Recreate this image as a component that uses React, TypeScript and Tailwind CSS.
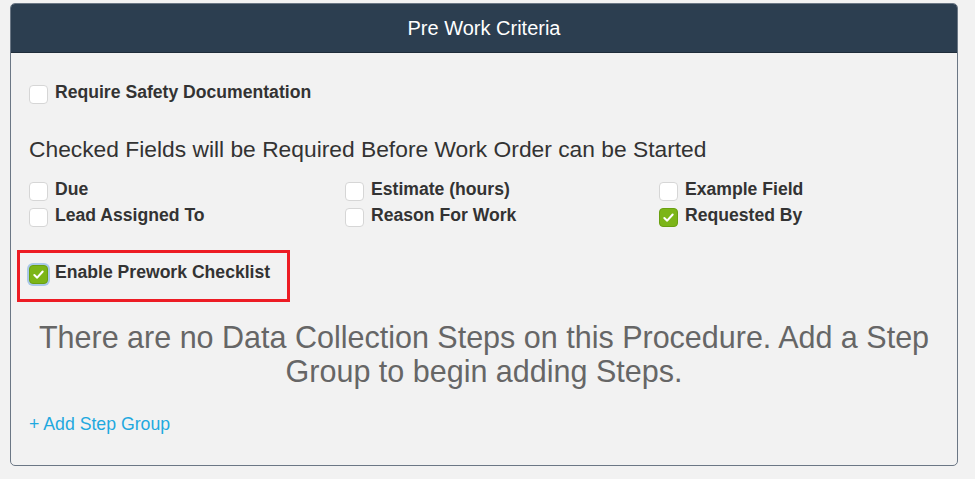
import { useState } from 'react';

const FIELDS: { label: string; checked: boolean }[] = [
  { label: 'Due', checked: false },
  { label: 'Estimate (hours)', checked: false },
  { label: 'Example Field', checked: false },
  { label: 'Lead Assigned To', checked: false },
  { label: 'Reason For Work', checked: false },
  { label: 'Requested By', checked: true },
];

function Check({ checked, focused, onToggle }: { checked: boolean; focused?: boolean; onToggle: () => void }) {
  return (
    <button
      type="button"
      onClick={onToggle}
      className={
        'w-[19px] h-[19px] shrink-0 rounded-[4px] border flex items-center justify-center ' +
        (checked ? 'bg-[#7cb518] border-[#6aa010] ' : 'bg-white border-[#d6d6d6] ') +
        (focused ? 'shadow-[0_0_0_2px_#a9c8e8]' : '')
      }
    >
      {checked && (
        <svg width="13" height="13" viewBox="0 0 14 14" fill="none">
          <path d="M2.5 7.5 L5.6 10.4 L11.5 3.8" stroke="white" strokeWidth="2.2" strokeLinecap="round" strokeLinejoin="round" />
        </svg>
      )}
    </button>
  );
}

function CheckRow({ label, checked, focused, onToggle }: { label: string; checked: boolean; focused?: boolean; onToggle: () => void }) {
  return (
    <label className="flex items-center gap-[7px] h-[26px] cursor-pointer">
      <Check checked={checked} focused={focused} onToggle={onToggle} />
      <span className="text-[17.6px] font-bold text-[#333] leading-none -mt-[3px] whitespace-nowrap">{label}</span>
    </label>
  );
}

export default function App() {
  const [safety, setSafety] = useState(false);
  const [fields, setFields] = useState(FIELDS);
  const [prework, setPrework] = useState(true);

  return (
    <div className="min-h-[479px] w-[975px] bg-[#f2f2f2] pt-[3px] pl-[10px] pr-[17px] font-['Liberation_Sans',Arial,sans-serif]">
      <div className="h-[463px] border border-[#6b7785] rounded-[5px] overflow-hidden bg-[#f2f2f2] flex flex-col">
        <div className="h-[49px] shrink-0 bg-[#2c3e50] flex items-center justify-center border-b border-[#1f2d3a]">
          <h4 className="text-[20px] text-white">Pre Work Criteria</h4>
        </div>

        <div className="pl-[18px] pr-[18px] pt-[28px]">
          <CheckRow label="Require Safety Documentation" checked={safety} onToggle={() => setSafety(!safety)} />

          <p className="mt-[29px] text-[22.8px] text-[#333] leading-[26px]">
            Checked Fields will be Required Before Work Order can be Started
          </p>

          <div className="mt-[16px] grid grid-cols-[316px_314px_1fr]">
            {fields.map((f, i) => (
              <CheckRow
                key={f.label}
                label={f.label}
                checked={f.checked}
                onToggle={() => setFields(fields.map((x, j) => (j === i ? { ...x, checked: !x.checked } : x)))}
              />
            ))}
          </div>

          <div className="mt-[20px] -ml-[12px] w-[273px] h-[52px] border-[3px] border-[#ed1c24] pl-[9px] pb-[3px] flex items-center">
            <CheckRow label="Enable Prework Checklist" checked={prework} focused onToggle={() => setPrework(!prework)} />
          </div>

          <p className="mt-[18px] text-center text-[30.5px] leading-[34px] text-[#666]">
            There are no Data Collection Steps on this Procedure. Add a Step Group to begin adding Steps.
          </p>

          <a href="#" className="inline-block mt-[28px] text-[17.7px] text-[#1fa9df] leading-none">
            + Add Step Group
          </a>
        </div>
      </div>
    </div>
  );
}
